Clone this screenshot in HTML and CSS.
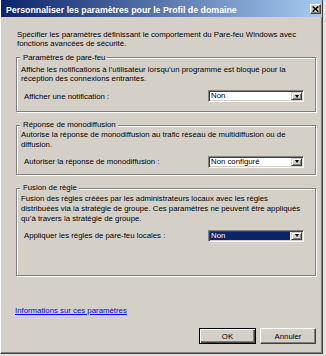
FILE: index.html
```html
<!DOCTYPE html>
<html lang="fr">
<head>
  <meta charset="UTF-8" />
  <title>Personnaliser les paramètres pour le Profil de domaine</title>
  <link rel="stylesheet" href="styles.css">
</head>
<body>
  <div class="window">
    <div class="titlebar">
      <span class="title">Personnaliser les paramètres pour le Profil de domaine</span>
      <span class="close-btn">
        <svg width="7" height="6" viewBox="0 0 7 6"><path d="M0.6 0.5 L6.4 5.5 M6.4 0.5 L0.6 5.5" stroke="#000" stroke-width="1.5" fill="none"/></svg>
      </span>
    </div>

    <div class="content">
      <p class="intro">Spécifier les paramètres définissant le comportement du Pare-feu Windows avec<br>fonctions avancées de sécurité.</p>

      <fieldset class="group group-notify">
        <legend>Paramètres de pare-feu</legend>
        <p class="desc">Affiche les notifications à l’utilisateur lorsqu’un programme est bloqué pour la<br>réception des connexions entrantes.</p>
        <div class="setting">
          <label>Afficher une notification :</label>
          <div class="combo"><span class="combo-value">Non</span><span class="combo-arrow"></span></div>
        </div>
      </fieldset>

      <fieldset class="group group-unicast">
        <legend>Réponse de monodiffusion</legend>
        <p class="desc">Autorise la réponse de monodiffusion au trafic réseau de multidiffusion ou de<br>diffusion.</p>
        <div class="setting">
          <label>Autoriser la réponse de monodiffusion :</label>
          <div class="combo"><span class="combo-value">Non configuré</span><span class="combo-arrow"></span></div>
        </div>
      </fieldset>

      <fieldset class="group group-merge">
        <legend>Fusion de règle</legend>
        <p class="desc">Fusion des règles créées par les administrateurs locaux avec les règles<br>distribuées via la stratégie de groupe. Ces paramètres ne peuvent être appliqués<br>qu’à travers la stratégie de groupe.</p>
        <div class="setting">
          <label>Appliquer les règles de pare-feu locales :</label>
          <div class="combo"><span class="combo-value selected">Non</span><span class="combo-arrow"></span></div>
        </div>
      </fieldset>

      <a class="info-link" href="#">Informations sur ces paramètres</a>

      <div class="buttons">
        <button class="btn btn-default">OK</button>
        <button class="btn">Annuler</button>
      </div>
    </div>
  </div>
</body>
</html>
```

FILE: styles.css
```css
body {
  margin: 0;
  background-color: #e4e2dc;
  font-family: 'Liberation Sans', Arial, sans-serif;
  font-size: 7.8px;
  line-height: 9.6px;
  color: #000;
}
.window {
  width: 323px;
  height: 354px;
  box-sizing: border-box;
  background-color: #d4d0c8;
  border-left: 1px solid #fff;
  border-right: 1px solid #404040;
  border-bottom: 1px solid #404040;
  box-shadow: inset -1px -1px 0 #808080;
  display: flex;
  flex-direction: column;
}
.titlebar {
  flex: none;
  height: 17px;
  display: flex;
  align-items: flex-start;
  justify-content: space-between;
  padding: 0 1px 0 5px;
  background: linear-gradient(to right, #0a246a, #a6caf0);
  color: #fff;
  font-weight: bold;
  font-size: 8.8px;
}
.title {
  padding-top: 5.5px;
  white-space: nowrap;
}
.close-btn {
  margin-top: 4px;
  width: 11px;
  height: 10px;
  box-sizing: border-box;
  display: flex;
  align-items: center;
  justify-content: center;
  background-color: #d4d0c8;
  border: 1px solid;
  border-color: #fff #404040 #404040 #fff;
  box-shadow: inset -1px -1px 0 #808080;
}
.content {
  flex: 1;
  display: flex;
  flex-direction: column;
  padding: 12.5px 6px 0 15px;
}
.intro {
  margin: 0 0 4px 1px;
  white-space: nowrap;
}
.group {
  margin: 0;
  padding: 0 0 0 4px;
  min-width: 0;
  border: 1px solid #808080;
  box-shadow: 1px 1px 0 #fff, inset 1px 1px 0 #fff;
}
.group legend {
  margin-left: -1px;
  padding: 0 2px 0 3px;
  background-color: #d4d0c8;
}
.group-notify {
  padding-top: 2.5px;
  padding-bottom: 9px;
}
.group-unicast {
  margin-top: 8px;
  padding-top: 0;
  padding-bottom: 6px;
}
.group-merge {
  margin-top: 8.5px;
  padding-top: 1.5px;
  padding-bottom: 33px;
}
.desc {
  margin: 0;
  white-space: nowrap;
}
.setting {
  display: flex;
  align-items: center;
  justify-content: space-between;
  height: 12px;
  margin: 6.5px 11px 0 3px;
}
.combo {
  width: 96px;
  height: 12px;
  box-sizing: border-box;
  display: flex;
  background-color: #fff;
  border: 1px solid;
  border-color: #808080 #fff #fff #808080;
  box-shadow: inset 1px 1px 0 #404040, inset -1px -1px 0 #d4d0c8;
  padding: 1px;
}
.combo-value {
  flex: 1;
  margin: 0 1px 0 0;
  padding-left: 1px;
  line-height: 8px;
  white-space: nowrap;
}
.combo-value.selected {
  background-color: #0a246a;
  color: #fff;
}
.combo-arrow {
  width: 11px;
  box-sizing: border-box;
  display: flex;
  align-items: center;
  justify-content: center;
  background-color: #d4d0c8;
  border: 1px solid;
  border-color: #d4d0c8 #404040 #404040 #d4d0c8;
  box-shadow: inset 1px 1px 0 #fff, inset -1px -1px 0 #808080;
}
.combo-arrow::after {
  content: "";
  border-left: 2.5px solid transparent;
  border-right: 2.5px solid transparent;
  border-top: 3px solid #000;
}
.info-link {
  align-self: flex-start;
  margin: 30px 0 0 -1px;
  color: #0000ff;
  text-decoration: underline;
}
.buttons {
  display: flex;
  justify-content: flex-end;
  gap: 4px;
  margin-top: 13px;
}
.btn {
  width: 56px;
  height: 16px;
  box-sizing: border-box;
  padding: 0;
  font-family: 'Liberation Sans', Arial, sans-serif;
  font-size: 7.8px;
  color: #000;
  background-color: #d4d0c8;
  border: 1px solid;
  border-color: #fff #404040 #404040 #fff;
  box-shadow: inset -1px -1px 0 #808080;
}
.btn-default {
  width: 57px;
  border-color: #000;
  box-shadow: inset 1px 1px 0 #fff, inset -1px -1px 0 #404040, inset -2px -2px 0 #808080;
}
```
